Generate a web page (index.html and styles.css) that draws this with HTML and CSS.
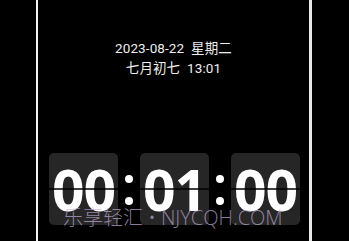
FILE: index.html
```html
<!DOCTYPE html>
<html lang="zh">
<head>
<meta charset="utf-8">
<link rel="stylesheet" href="styles.css">
</head>
<body>
<div class="panel">
  <div class="date">
    <div class="line">2023-08-22&nbsp;&nbsp;星期二</div>
    <div class="line">七月初七&nbsp;&nbsp;13:01</div>
  </div>
  <div class="clock">
    <div class="card"><span>00</span></div>
    <div class="colon"><i></i><i></i></div>
    <div class="card"><span>01</span></div>
    <div class="colon"><i></i><i></i></div>
    <div class="card"><span>00</span></div>
  </div>
  <div class="mark">乐享轻汇 • NJYCQH.COM</div>
</div>
</body>
</html>
```
FILE: styles.css
```css
html, body {
  margin: 0;
  padding: 0;
  background: #000;
  width: 349px;
  height: 241px;
  overflow: hidden;
}
.panel {
  position: relative;
  margin-left: 36px;
  width: 271px;
  height: 241px;
  border-left: 2px solid #f2f2f2;
  border-right: 3px solid #e8e8e8;
  display: flex;
  flex-direction: column;
  align-items: center;
}
.date {
  margin-top: 38px;
  color: #eeeeee;
  font-family: Roboto, "Noto Sans CJK SC", sans-serif;
  font-size: 13.5px;
  line-height: 20px;
  letter-spacing: 0.1px;
  text-align: center;
}
.clock {
  margin-top: 75px;
  display: flex;
  align-items: center;
  margin-left: 2px;
}
.card {
  width: 69px;
  height: 72px;
  background: #262626;
  border-radius: 5px;
  position: relative;
  display: flex;
  align-items: center;
  justify-content: center;
}
.card::after {
  content: "";
  position: absolute;
  left: 0;
  right: 0;
  top: 35px;
  height: 2px;
  background: rgba(0, 0, 0, 0.75);
}
.card span {
  color: #fff;
  font-family: "Open Sans", Roboto, sans-serif;
  font-weight: 700;
  font-size: 57px;
  line-height: 1;
  letter-spacing: -1px;
  margin-top: 1px;
}
.colon {
  width: 22px;
  height: 72px;
  display: flex;
  flex-direction: column;
  align-items: center;
  justify-content: center;
  gap: 14px;
  padding-top: 2px;
  box-sizing: border-box;
}
.colon i {
  display: block;
  width: 8px;
  height: 8px;
  border-radius: 50%;
  background: #fff;
}
.mark {
  position: absolute;
  left: 25px;
  top: 205px;
  color: rgba(190, 170, 210, 0.72);
  font-family: "Open Sans", "Noto Sans CJK SC", sans-serif;
  font-weight: 300;
  font-size: 20px;
  line-height: 26px;
  white-space: nowrap;
}
```
